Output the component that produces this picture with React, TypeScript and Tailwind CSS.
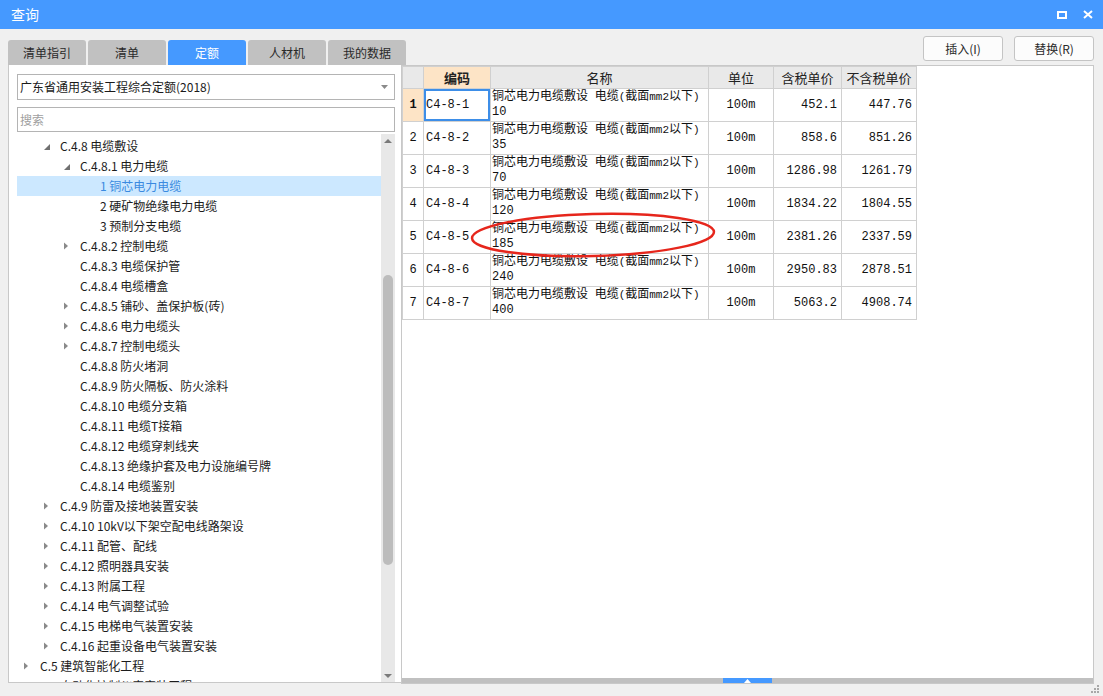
import React from "react";

// ─── Tree data ────────────────────────────────────────────────────────────────
type Level = 1 | 2 | 3 | 4;
interface TreeNode {
  label: string;
  level: Level;
  arrow?: "open" | "closed";
  selected?: boolean;
}

const tree: TreeNode[] = [
  { label: "C.4.8 电缆敷设", level: 2, arrow: "open" },
  { label: "C.4.8.1 电力电缆", level: 3, arrow: "open" },
  { label: "1 铜芯电力电缆", level: 4, selected: true },
  { label: "2 硬矿物绝缘电力电缆", level: 4 },
  { label: "3 预制分支电缆", level: 4 },
  { label: "C.4.8.2 控制电缆", level: 3, arrow: "closed" },
  { label: "C.4.8.3 电缆保护管", level: 3 },
  { label: "C.4.8.4 电缆槽盒", level: 3 },
  { label: "C.4.8.5 铺砂、盖保护板(砖)", level: 3, arrow: "closed" },
  { label: "C.4.8.6 电力电缆头", level: 3, arrow: "closed" },
  { label: "C.4.8.7 控制电缆头", level: 3, arrow: "closed" },
  { label: "C.4.8.8 防火堵洞", level: 3 },
  { label: "C.4.8.9 防火隔板、防火涂料", level: 3 },
  { label: "C.4.8.10 电缆分支箱", level: 3 },
  { label: "C.4.8.11 电缆T接箱", level: 3 },
  { label: "C.4.8.12 电缆穿刺线夹", level: 3 },
  { label: "C.4.8.13 绝缘护套及电力设施编号牌", level: 3 },
  { label: "C.4.8.14 电缆鉴别", level: 3 },
  { label: "C.4.9 防雷及接地装置安装", level: 2, arrow: "closed" },
  { label: "C.4.10 10kV以下架空配电线路架设", level: 2, arrow: "closed" },
  { label: "C.4.11 配管、配线", level: 2, arrow: "closed" },
  { label: "C.4.12 照明器具安装", level: 2, arrow: "closed" },
  { label: "C.4.13 附属工程", level: 2, arrow: "closed" },
  { label: "C.4.14 电气调整试验", level: 2, arrow: "closed" },
  { label: "C.4.15 电梯电气装置安装", level: 2, arrow: "closed" },
  { label: "C.4.16 起重设备电气装置安装", level: 2, arrow: "closed" },
  { label: "C.5 建筑智能化工程", level: 1, arrow: "closed" },
  { label: "C.6 自动化控制仪表安装工程", level: 1, arrow: "closed" },
];

const indent: Record<Level, string> = {
  1: "pl-[3px]",
  2: "pl-[23px]",
  3: "pl-[43px]",
  4: "pl-[63px]",
};

// ─── Table data ───────────────────────────────────────────────────────────────
const rows = [
  { code: "C4-8-1", size: "10", tax: "452.1", noTax: "447.76" },
  { code: "C4-8-2", size: "35", tax: "858.6", noTax: "851.26" },
  { code: "C4-8-3", size: "70", tax: "1286.98", noTax: "1261.79" },
  { code: "C4-8-4", size: "120", tax: "1834.22", noTax: "1804.55" },
  { code: "C4-8-5", size: "185", tax: "2381.26", noTax: "2337.59" },
  { code: "C4-8-6", size: "240", tax: "2950.83", noTax: "2878.51" },
  { code: "C4-8-7", size: "400", tax: "5063.2", noTax: "4908.74" },
];

const tabs = ["清单指引", "清单", "定额", "人材机", "我的数据"];

const ui = { fontFamily: '"Noto Sans CJK SC", "Noto Sans", sans-serif' };
const mono = { fontFamily: '"Liberation Mono", "Noto Sans CJK SC", monospace' };

function Arrow({ kind }: { kind?: "open" | "closed" }) {
  return (
    <svg width="20" height="20" className="shrink-0">
      {kind === "open" && <polygon points="10,8 10,14 4,14" fill="#707070" />}
      {kind === "closed" && <polygon points="4,6.5 8,10 4,13.5" fill="#8a8a8a" />}
    </svg>
  );
}

function TreeList() {
  return (
    <div className="ml-[8px] mt-[2px] flex h-[548px]">
      <div className="w-[364px] overflow-hidden pt-[2px]">
        {tree.map((n, i) => (
          <div
            key={i}
            className={
              "flex h-[20px] items-center whitespace-nowrap text-[12px] " +
              indent[n.level] +
              (n.selected ? " bg-[#cce8ff] text-[#3a8ae0]" : " text-[#1c1c1c]")
            }
          >
            <Arrow kind={n.arrow} />
            <span>{n.label}</span>
          </div>
        ))}
      </div>
      {/* vertical scrollbar */}
      <div className="flex w-[14px] flex-col items-center bg-[#e8e8e8]">
        <svg width="14" height="14" className="shrink-0">
          <polygon points="3,9 11,9 7,5" fill="#7a7a7a" />
        </svg>
        <div className="mt-[127px] h-[290px] w-[10px] rounded-[5px] bg-[#bcbcbc]" />
        <div className="flex-1" />
        <svg width="14" height="12" className="shrink-0">
          <polygon points="3,4 11,4 7,8" fill="#7a7a7a" />
        </svg>
      </div>
    </div>
  );
}

function LeftPanel() {
  return (
    <div className="ml-[8px] flex h-[618px] w-[393px] flex-col border-b border-l border-[#c8c8c8] bg-white">
      <div className="ml-[8px] mt-[9px] flex h-[26px] w-[378px] items-center justify-between border border-[#b4b4b4] pl-[2px] pr-[6px] text-[12px] text-[#1a1a1a]">
        <span>广东省通用安装工程综合定额(2018)</span>
        <svg width="7" height="4">
          <polygon points="0,0 7,0 3.5,4" fill="#8a8a8a" />
        </svg>
      </div>
      <div className="ml-[8px] mt-[7px] flex h-[25px] w-[378px] items-center border border-[#b4b4b4] pl-[2px] text-[12px] text-[#a0a0a0]">
        搜索
      </div>
      <TreeList />
    </div>
  );
}

// name cell: ascii parts a touch narrower, like the half-width bitmap font
function NameText({ size }: { size: string }) {
  const a = "text-[11px]";
  return (
    <div className="leading-[15px]">
      <span>铜芯电力电缆敷设</span>
      <span className={a}> </span>
      <span>电缆</span>
      <span className={a}>(</span>
      <span>截面</span>
      <span className={a}>mm2</span>
      <span>以下</span>
      <span className={a}>)</span>
      <br />
      <span>{size}</span>
    </div>
  );
}

function RightPanel() {
  const cell = "flex h-full items-center border-r border-[#d0d0d0] shrink-0";
  return (
    <div className="relative flex h-[619px] w-[693px] flex-col border border-[#c8c8c8] bg-white">
      <div className="flex-1 overflow-hidden">
        {/* header */}
        <div className="flex h-[23px] w-[515px] border-b border-l border-t border-[#d0d0d0] bg-[#e9e9e9] text-[13px] text-[#222]">
          <div className={cell + " w-[21px]"} />
          <div className={cell + " w-[67px] justify-center bg-[#fde4c6] font-bold"}>编码</div>
          <div className={cell + " w-[218px] justify-center"}>名称</div>
          <div className={cell + " w-[65px] justify-center"}>单位</div>
          <div className={cell + " w-[68px] justify-center"}>含税单价</div>
          <div className={cell + " w-[75px] justify-center"}>不含税单价</div>
        </div>
        {rows.map((r, i) => (
          <div
            key={r.code}
            className="flex h-[33px] w-[515px] border-b border-l border-[#d0d0d0] text-[12px] text-[#111]"
            style={mono}
          >
            <div
              className={
                cell +
                " w-[21px] justify-center" +
                (i === 0 ? " bg-[#fde4c6] font-bold" : "")
              }
            >
              {i + 1}
            </div>
            <div
              className={
                cell +
                " w-[67px] pl-[2px]" +
                (i === 0 ? " shadow-[inset_0_0_0_2px_#3d8ee8]" : "")
              }
            >
              {r.code}
            </div>
            <div className={cell + " w-[218px] pl-[1px] whitespace-nowrap"}>
              <NameText size={r.size} />
            </div>
            <div className={cell + " w-[65px] justify-center"}>100m</div>
            <div className={cell + " w-[68px] justify-end pr-[4px]"}>{r.tax}</div>
            <div className={cell + " w-[75px] justify-end pr-[4px]"}>{r.noTax}</div>
          </div>
        ))}
      </div>
      {/* horizontal splitter bar */}
      <div className="flex h-[5px] bg-[#c0c0c0]">
        <div className="ml-[321px] flex h-full w-[49px] items-center justify-center bg-[#4599ff]">
          <svg width="7" height="4">
            <polygon points="0,4 7,4 3.5,0" fill="#ffffff" />
          </svg>
        </div>
      </div>
      {/* red annotation ellipse */}
      <svg
        className="pointer-events-none absolute left-[64px] top-[142px]"
        width="254"
        height="54"
      >
        <ellipse
          cx="127"
          cy="27"
          rx="121"
          ry="21"
          fill="none"
          stroke="#e6261c"
          strokeWidth="2.5"
          transform="rotate(-1.5 127 27)"
        />
      </svg>
    </div>
  );
}

export default function App() {
  return (
    <div className="flex h-[696px] w-[1103px] flex-col overflow-hidden bg-[#f0f0f0]" style={ui}>
      {/* title bar */}
      <div className="flex h-[29px] shrink-0 items-center justify-between bg-[#4599ff] pl-[11px] pr-[10px] text-white">
        <span className="text-[14px]">查询</span>
        <div className="flex items-center gap-[16px]">
          <svg width="10" height="8">
            <rect x="1" y="1" width="8" height="6" fill="none" stroke="#fff" strokeWidth="2" />
          </svg>
          <svg width="10" height="9">
            <path d="M1 1 L9 8 M9 1 L1 8" stroke="#fff" strokeWidth="2" />
          </svg>
        </div>
      </div>

      {/* tabs + action buttons */}
      <div className="flex h-[36px] shrink-0 justify-between">
        <div className="flex gap-[2px] pl-[8px] pt-[11px]">
          {tabs.map((t) => (
            <div
              key={t}
              className={
                "flex h-[25px] w-[78px] items-center justify-center rounded-t-[3px] text-[12px] " +
                (t === "定额" ? "bg-[#4599ff] text-white" : "bg-[#c1c1c1] text-[#2a2a2a]")
              }
            >
              {t}
            </div>
          ))}
        </div>
        <div className="flex gap-[11px] pr-[9px] pt-[7px]">
          <button className="h-[25px] w-[80px] rounded-[3px] border border-[#c4c4c4] bg-[#fcfcfc] text-[12px] text-[#2a2a2a]">
            插入(I)
          </button>
          <button className="h-[25px] w-[80px] rounded-[3px] border border-[#c4c4c4] bg-[#fcfcfc] text-[12px] text-[#2a2a2a]">
            替换(R)
          </button>
        </div>
      </div>

      {/* panels */}
      <div className="flex shrink-0 items-start">
        <LeftPanel />
        <RightPanel />
      </div>

      {/* resize grip */}
      <div className="flex flex-1 items-end justify-end pb-[2px] pr-[3px]">
        <svg width="9" height="9">
          <rect x="6" y="0" width="2" height="2" fill="#a8a8a8" />
          <rect x="3" y="3" width="2" height="2" fill="#a8a8a8" />
          <rect x="6" y="3" width="2" height="2" fill="#a8a8a8" />
          <rect x="0" y="6" width="2" height="2" fill="#a8a8a8" />
          <rect x="3" y="6" width="2" height="2" fill="#a8a8a8" />
          <rect x="6" y="6" width="2" height="2" fill="#a8a8a8" />
        </svg>
      </div>
    </div>
  );
}
